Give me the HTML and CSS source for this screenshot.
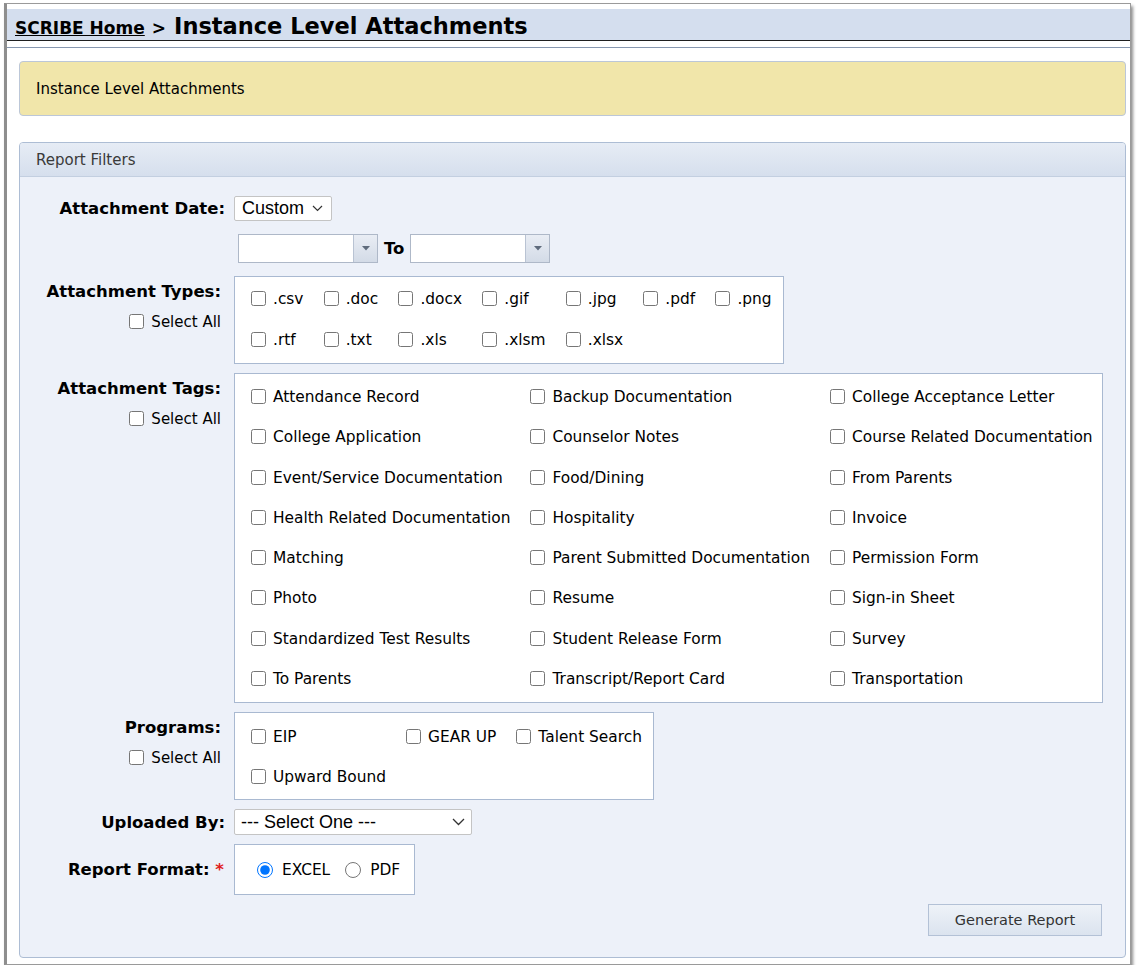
FILE: index.html
```html
<!DOCTYPE html>
<html>
<head>
<meta charset="utf-8">
<title>Instance Level Attachments</title>
<link rel="stylesheet" href="styles.css">
</head>
<body>
<div class="window">
  <div class="titlebar">
    <a class="home" href="#">SCRIBE Home</a><span class="sep">&gt;</span><span class="title">Instance Level Attachments</span>
  </div>
  <div class="content">
    <div class="notice">Instance Level Attachments</div>
    <div class="panel">
      <div class="panel-head">Report Filters</div>
      <div class="panel-body">
        <div class="form">
          <div class="row row-center">
            <div class="lbl">Attachment Date:</div>
            <div class="ctl">
              <div class="select select-custom"><span>Custom</span>
                <svg width="11" height="7" viewBox="0 0 11 7"><polyline points="1,1 5.5,5.5 10,1" fill="none" stroke="#333" stroke-width="1.2"/></svg>
              </div>
            </div>
          </div>
          <div class="row row-dates">
            <div class="lbl"></div>
            <div class="ctl dates">
              <div class="datepick"><div class="dp-input"></div><div class="dp-btn"><svg width="8" height="5" viewBox="0 0 8 5"><polygon points="0,0 8,0 4,4.5" fill="#5f6b7c"/></svg></div></div>
              <span class="to">To</span>
              <div class="datepick"><div class="dp-input"></div><div class="dp-btn"><svg width="8" height="5" viewBox="0 0 8 5"><polygon points="0,0 8,0 4,4.5" fill="#5f6b7c"/></svg></div></div>
            </div>
          </div>
          <div class="row row-types">
            <div class="lbl lbl-top">
              <div>Attachment Types:</div>
              <label class="selall"><input type="checkbox">Select All</label>
            </div>
            <div class="ctl">
              <div class="box grid7 types">
                <label><input type="checkbox">.csv</label>
                <label><input type="checkbox">.doc</label>
                <label><input type="checkbox">.docx</label>
                <label><input type="checkbox">.gif</label>
                <label><input type="checkbox">.jpg</label>
                <label><input type="checkbox">.pdf</label>
                <label><input type="checkbox">.png</label>
                <label><input type="checkbox">.rtf</label>
                <label><input type="checkbox">.txt</label>
                <label><input type="checkbox">.xls</label>
                <label><input type="checkbox">.xlsm</label>
                <label><input type="checkbox">.xlsx</label>
              </div>
            </div>
          </div>
          <div class="row">
            <div class="lbl lbl-top">
              <div>Attachment Tags:</div>
              <label class="selall"><input type="checkbox">Select All</label>
            </div>
            <div class="ctl">
              <div class="box grid3 tags">
                <label><input type="checkbox">Attendance Record</label>
                <label><input type="checkbox">Backup Documentation</label>
                <label><input type="checkbox">College Acceptance Letter</label>
                <label><input type="checkbox">College Application</label>
                <label><input type="checkbox">Counselor Notes</label>
                <label><input type="checkbox">Course Related Documentation</label>
                <label><input type="checkbox">Event/Service Documentation</label>
                <label><input type="checkbox">Food/Dining</label>
                <label><input type="checkbox">From Parents</label>
                <label><input type="checkbox">Health Related Documentation</label>
                <label><input type="checkbox">Hospitality</label>
                <label><input type="checkbox">Invoice</label>
                <label><input type="checkbox">Matching</label>
                <label><input type="checkbox">Parent Submitted Documentation</label>
                <label><input type="checkbox">Permission Form</label>
                <label><input type="checkbox">Photo</label>
                <label><input type="checkbox">Resume</label>
                <label><input type="checkbox">Sign-in Sheet</label>
                <label><input type="checkbox">Standardized Test Results</label>
                <label><input type="checkbox">Student Release Form</label>
                <label><input type="checkbox">Survey</label>
                <label><input type="checkbox">To Parents</label>
                <label><input type="checkbox">Transcript/Report Card</label>
                <label><input type="checkbox">Transportation</label>
              </div>
            </div>
          </div>
          <div class="row">
            <div class="lbl lbl-top">
              <div>Programs:</div>
              <label class="selall"><input type="checkbox">Select All</label>
            </div>
            <div class="ctl">
              <div class="box grid3 programs">
                <label><input type="checkbox">EIP</label>
                <label><input type="checkbox">GEAR UP</label>
                <label><input type="checkbox">Talent Search</label>
                <label><input type="checkbox">Upward Bound</label>
              </div>
            </div>
          </div>
          <div class="row row-center">
            <div class="lbl">Uploaded By:</div>
            <div class="ctl">
              <div class="select select-user"><span>--- Select One ---</span>
                <svg width="13" height="8" viewBox="0 0 13 8"><polyline points="1,1 6.5,6.5 12,1" fill="none" stroke="#333" stroke-width="1.3"/></svg>
              </div>
            </div>
          </div>
          <div class="row row-center">
            <div class="lbl lbl-req">Report Format: <span class="req">*</span></div>
            <div class="ctl">
              <div class="box format">
                <label><input type="radio" name="fmt" checked>EXCEL</label>
                <label><input type="radio" name="fmt">PDF</label>
              </div>
            </div>
          </div>
        </div>
        <div class="actions">
          <button class="btn" type="button">Generate Report</button>
        </div>
      </div>
    </div>
  </div>
</div>
</body>
</html>
```

FILE: styles.css
```css
html, body {
  margin: 0;
  padding: 0;
  background: #ffffff;
}
body {
  font-family: "DejaVu Sans", Verdana, sans-serif;
  font-size: 15px;
  color: #000;
}
.window {
  margin: 3px 0 0 4px;
  width: 1123px;
  height: 960px;
  border: 1px solid #9a9a9a;
  border-left: 3px solid #8e8e8e;
  box-shadow: 2px 3px 3px rgba(0, 0, 0, 0.45);
  background: #fff;
  display: flex;
  flex-direction: column;
}
.titlebar {
  margin-top: 5px;
  height: 32px;
  background: #d4deee;
  border-bottom: 1px solid #1f1f1f;
  padding-left: 8px;
  padding-top: 4px;
  display: flex;
  align-items: baseline;
  box-sizing: border-box;
  line-height: 27px;
  white-space: nowrap;
}
.home {
  font-size: 17px;
  font-weight: bold;
  color: #000;
  text-decoration: underline;
}
.sep {
  font-size: 17px;
  font-weight: bold;
  margin: 0 8px 0 7px;
}
.title {
  font-size: 22.5px;
  font-weight: bold;
}
.content {
  margin-top: 6px;
  border-top: 1px solid #8797b0;
  padding: 13px 4px 0 12px;
  flex: 1;
}
.notice {
  height: 53px;
  background: #f1e6aa;
  border: 1px solid #bcc7d8;
  border-radius: 4px;
  padding-left: 16px;
  display: flex;
  align-items: center;
}
.panel {
  margin-top: 26px;
  border: 1px solid #adbdd4;
  border-radius: 4px;
  background: #edf1f9;
  overflow: hidden;
}
.panel-head {
  height: 34px;
  background: linear-gradient(#e6ecf5, #d6dfed);
  border-bottom: 1px solid #c3cfe0;
  padding-left: 16px;
  display: flex;
  align-items: center;
  color: #3a3a3a;
  box-sizing: border-box;
}
.panel-body {
  padding: 19px 23px 21px 0;
}
.form {
  display: flex;
  flex-direction: column;
  gap: 9px;
}
.row {
  display: flex;
  align-items: flex-start;
  gap: 9px;
}
.row-center {
  align-items: center;
}
.row-dates {
  margin-top: 4px;
}
.row-types {
  margin-top: 4px;
}
.lbl {
  width: 205px;
  flex: none;
  text-align: right;
  font-weight: bold;
  font-size: 16.5px;
}
.lbl-top {
  padding-top: 6px;
  padding-right: 4px;
  box-sizing: border-box;
  line-height: 20px;
}
.lbl-req {
  padding-right: 1px;
  box-sizing: border-box;
}
.req {
  color: #e02020;
  font-weight: bold;
}
.selall {
  display: inline-flex;
  align-items: center;
  font-weight: normal;
  font-size: 15px;
  margin-top: 10px;
}
input[type="checkbox"] {
  width: 15px;
  height: 15px;
  margin: 0 7px 1px 0;
  flex: none;
}
input[type="radio"] {
  width: 16px;
  height: 16px;
  margin: 0 9px 0 0;
  flex: none;
}
.select {
  background: #fff;
  border: 1px solid #c4c4c4;
  border-radius: 2px;
  box-sizing: border-box;
  display: flex;
  align-items: center;
  justify-content: space-between;
  font-family: "Liberation Sans", Arial, sans-serif;
  font-size: 18px;
  color: #000;
}
.select-custom {
  width: 98px;
  height: 25px;
  padding: 0 8px 0 7px;
}
.select-user {
  width: 238px;
  height: 26px;
  padding: 0 6px 0 6px;
}
.dates {
  display: flex;
  align-items: center;
  padding-left: 4px;
}
.datepick {
  width: 140px;
  height: 29px;
  border: 1px solid #aeb8c8;
  box-sizing: border-box;
  display: flex;
  background: #fff;
}
.dp-input {
  flex: 1;
}
.dp-btn {
  width: 23px;
  border-left: 1px solid #b9c3d3;
  background: linear-gradient(#e9edf4, #d3dbe7);
  display: flex;
  align-items: center;
  justify-content: center;
}
.to {
  font-weight: bold;
  font-size: 16.5px;
  margin: 0 6px 0 6px;
}
.box {
  background: #fff;
  border: 1px solid #a9b9d1;
  box-sizing: border-box;
}
.box label {
  display: flex;
  align-items: center;
  height: 20px;
  white-space: nowrap;
  font-size: 15.4px;
}
.grid7 {
  display: inline-grid;
  grid-template-columns: repeat(7, auto);
  column-gap: 20.2px;
  row-gap: 21px;
  padding: 12px 11px 13px 16px;
  justify-content: start;
}
.grid3 {
  display: inline-grid;
  grid-template-columns: repeat(3, auto);
  column-gap: 20px;
  justify-content: start;
}
.tags {
  row-gap: 20.3px;
  padding: 13px 9px 13px 16px;
}
.programs {
  row-gap: 20px;
  padding: 14px 11px 12px 16px;
}
.format {
  display: inline-flex;
  align-items: center;
  height: 51px;
  padding: 0 14px 0 22px;
}
.format label + label {
  margin-left: 15px;
}
.actions {
  display: flex;
  justify-content: flex-end;
  margin-top: 9px;
}
.btn {
  width: 174px;
  height: 32px;
  border: 1px solid #b3c1d6;
  background: linear-gradient(#eef2f8, #dbe3ef);
  color: #333;
  font-family: "DejaVu Sans", Verdana, sans-serif;
  font-size: 14.5px;
  padding: 0;
  border-radius: 0;
}
```
